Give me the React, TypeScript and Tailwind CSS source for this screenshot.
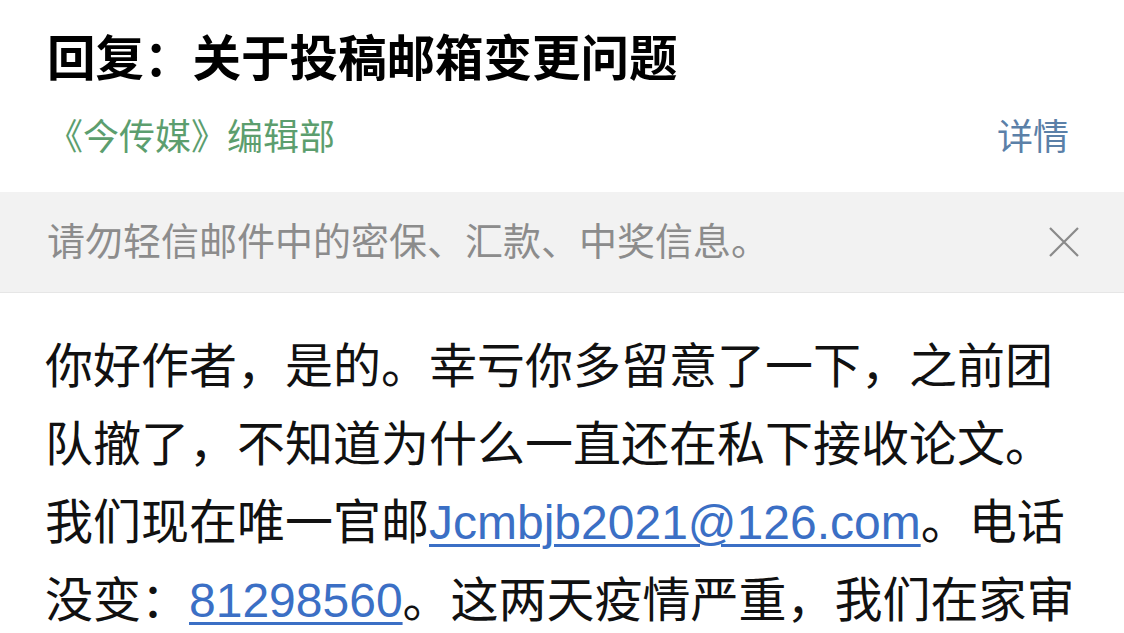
import React from "react";

const font = { fontFamily: '"Liberation Sans", "Noto Sans CJK SC", sans-serif' };

export default function App() {
  return (
    <div className="w-[1124px] h-[633px] overflow-hidden bg-white" style={font}>
      <div className="px-[47px] pt-[31px]">
        <h1 className="text-[48.5px] leading-[56px] font-bold text-black whitespace-nowrap">回复：关于投稿邮箱变更问题</h1>
        <div className="mt-[29px] flex items-center justify-between text-[36px] leading-[44px]">
          <span className="text-[#5c9e6e]">《今传媒》编辑部</span>
          <span className="text-[#5b80a8] pr-[8px]">详情</span>
        </div>
      </div>
      <div className="mt-[32px] h-[101px] bg-[#f2f2f2] border-b border-[#e6e6e6] flex items-center justify-between pl-[47px] pr-[44px]">
        <span className="text-[38px] text-[#8c8c8c] whitespace-nowrap">请勿轻信邮件中的密保、汇款、中奖信息。</span>
        <svg width="32" height="32" viewBox="0 0 32 32">
          <path d="M2 2 L30 30 M30 2 L2 30" stroke="#8a8a8a" strokeWidth="2.2" fill="none" />
        </svg>
      </div>
      <div className="px-[45px] pt-[35px] text-[48px] leading-[78px] text-[#111] whitespace-nowrap">
        <div>你好作者，是的。幸亏你多留意了一下，之前团</div>
        <div>队撤了，不知道为什么一直还在私下接收论文。</div>
        <div>
          我们现在唯一官邮<span className="text-[#3b6fc5] underline decoration-[3px] underline-offset-[5px]">Jcmbjb2021@126.com</span>。电话
        </div>
        <div>
          没变：<span className="text-[#3b6fc5] underline decoration-[3px] underline-offset-[5px]">81298560</span>。这两天疫情严重，我们在家审
        </div>
      </div>
    </div>
  );
}
